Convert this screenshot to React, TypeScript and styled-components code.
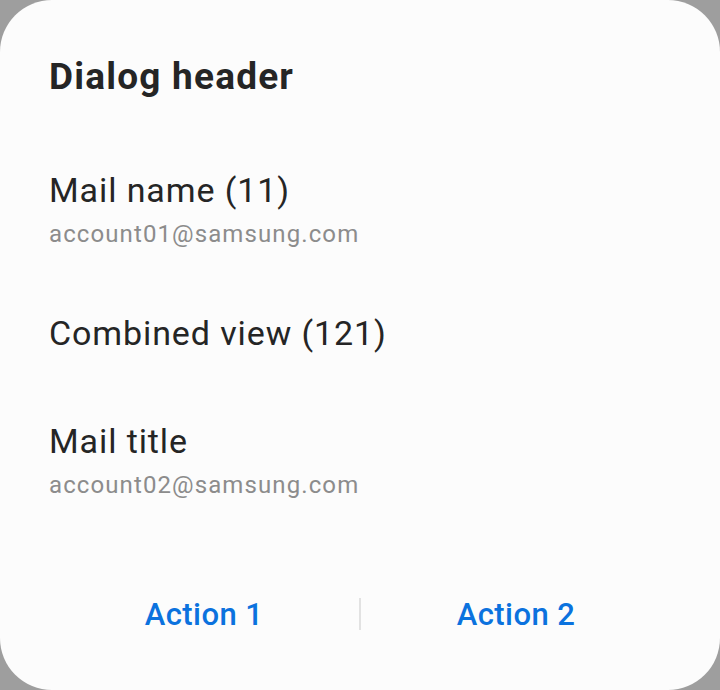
import styled, { createGlobalStyle } from 'styled-components';

const GlobalStyle = createGlobalStyle`
    html, body {
        margin: 0;
        padding: 0;
        background: #9e9e9e;
    }
    body {
        font-family: Roboto, "Noto Sans", sans-serif;
    }
`

interface Item {
    title: string;
    sub?: string;
}

const items: Item[] = [
    { title: "Mail name (11)", sub: "account01@samsung.com" },
    { title: "Combined view (121)" },
    { title: "Mail title", sub: "account02@samsung.com" },
];

export default function App() {
    return (
        <>
            <GlobalStyle />
            <Dialog>
                <Header>Dialog header</Header>
                <List>
                    {items.map((item) => (
                        <Row key={item.title}>
                            <Title>{item.title}</Title>
                            {item.sub && <Sub>{item.sub}</Sub>}
                        </Row>
                    ))}
                </List>
                <Actions>
                    <ActionBtn>Action 1</ActionBtn>
                    <Divider />
                    <ActionBtn>Action 2</ActionBtn>
                </Actions>
            </Dialog>
        </>
    );
}

const Dialog = styled.div`
    width: 720px;
    height: 690px;
    box-sizing: border-box;
    background: #fcfcfc;
    border-radius: 52px;
    padding: 55px 49px 0;
    display: flex;
    flex-direction: column;
`

const Header = styled.h1`
    margin: 0;
    color: #252525;
    font-size: 37px;
    font-weight: 700;
    letter-spacing: 1.2px;
    line-height: 44px;
`

const List = styled.div`
    margin-top: 37px;
    display: flex;
    flex-direction: column;
`

const Row = styled.div`
    padding: 33px 0;
    display: flex;
    flex-direction: column;
`

const Title = styled.div`
    color: #252525;
    font-size: 34px;
    letter-spacing: 0.9px;
    line-height: 42px;
`

const Sub = styled.div`
    margin-top: 11px;
    color: #8c8c8c;
    font-size: 24px;
    letter-spacing: 1.1px;
    line-height: 24px;
`

const Actions = styled.div`
    margin-top: 52px;
    height: 64px;
    display: flex;
    align-items: center;
`

const ActionBtn = styled.div`
    flex: 1;
    text-align: center;
    color: #0b72de;
    font-size: 31px;
    font-weight: 500;
    letter-spacing: 0.4px;
    cursor: pointer;
`

const Divider = styled.div`
    width: 2px;
    height: 32px;
    background: #e2e2e2;
`
